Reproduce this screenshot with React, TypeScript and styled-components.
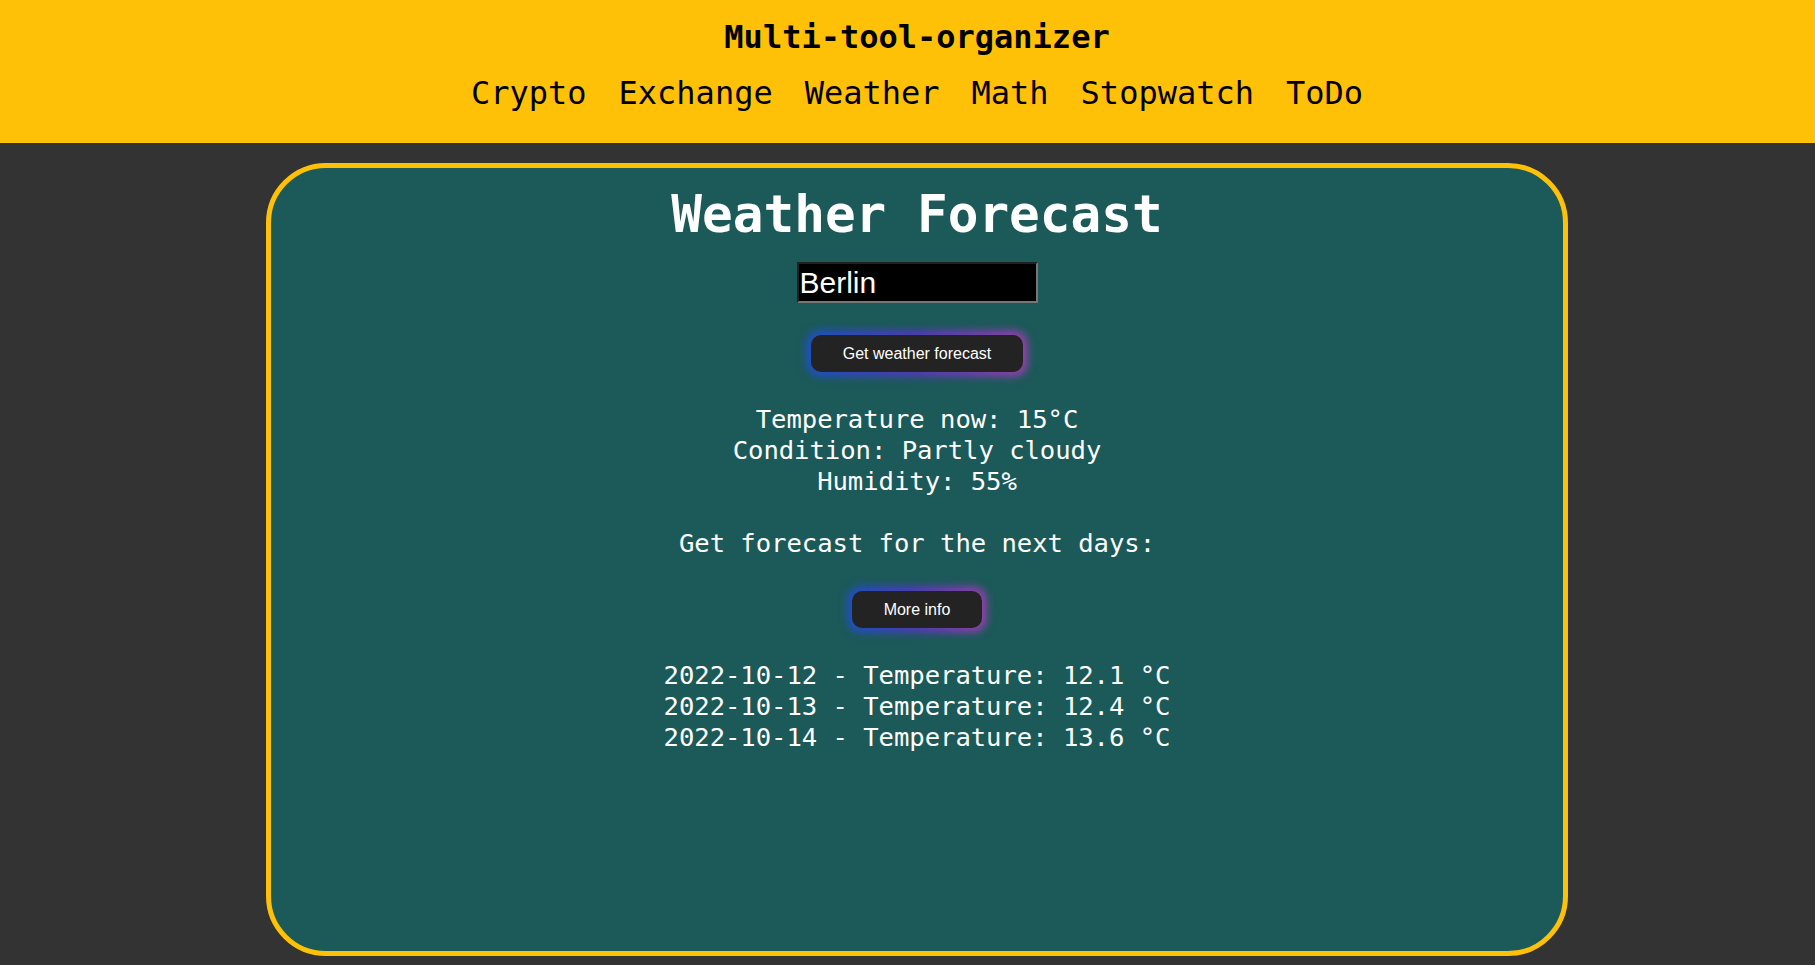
import React from "react";
import styled, { createGlobalStyle } from "styled-components";

const GlobalStyle = createGlobalStyle`
  html, body {
    margin: 0;
    padding: 0;
    background: #333333;
  }
  body {
    font-family: "DejaVu Sans Mono", "Liberation Mono", monospace;
  }
  * { box-sizing: border-box; }
`;

const Page = styled.div`
  min-height: 965px;
  background: #333333;
  display: flex;
  flex-direction: column;
`;

const Header = styled.header`
  background: #ffc107;
  height: 143px;
  padding: 17px 0 0 19px;
  display: flex;
  flex-direction: column;
  align-items: center;
  gap: 16px;
`;

const SiteTitle = styled.h1`
  margin: 0;
  font-size: 32px;
  line-height: 40px;
  font-weight: 700;
  color: #000;
`;

const Nav = styled.nav`
  display: flex;
  gap: 32px;
`;

const NavLink = styled.a`
  font-size: 32px;
  line-height: 40px;
  color: #000;
  text-decoration: none;
`;

const Main = styled.main`
  padding: 20px 0 9px 19px;
  display: flex;
  justify-content: center;
`;

const Card = styled.section`
  width: 1302px;
  height: 793px;
  background: #1c5959;
  border: 5px solid #ffc107;
  border-radius: 60px;
  padding-top: 17px;
  display: flex;
  flex-direction: column;
  align-items: center;
  color: #ffffff;
`;

const CardTitle = styled.h2`
  margin: 0;
  font-size: 51px;
  line-height: 60px;
  font-weight: 700;
`;

const CityInput = styled.input`
  margin-top: 17px;
  width: 241px;
  height: 41px;
  background: #000;
  color: #fff;
  border: 2px inset #767676;
  font-family: "Liberation Sans", Arial, sans-serif;
  font-size: 30px;
  padding: 0 1px;
  outline: none;
`;

const GlowButton = styled.button<{ $mt: number }>`
  margin-top: ${(p) => p.$mt}px;
  position: relative;
  z-index: 0;
  height: 37px;
  padding: 0 32px;
  border: none;
  border-radius: 10px;
  background: transparent;
  color: #ffffff;
  font-family: "Liberation Sans", Arial, sans-serif;
  font-size: 16px;
  cursor: pointer;

  &::before {
    content: "";
    position: absolute;
    inset: -4px;
    border-radius: 13px;
    background: linear-gradient(90deg, #1c4fd6 0%, #5a35c8 50%, #a63cb4 100%);
    filter: blur(4px);
    z-index: -2;
  }

  &::after {
    content: "";
    position: absolute;
    inset: 0;
    border-radius: 10px;
    background: #232323;
    z-index: -1;
  }
`;

const InfoBlock = styled.div<{ $mt: number }>`
  margin-top: ${(p) => p.$mt}px;
  display: flex;
  flex-direction: column;
  align-items: center;
  font-size: 25.6px;
  line-height: 31px;
  letter-spacing: -0.05px;
`;

const InfoLine = styled.p`
  margin: 0;
  white-space: pre;
`;

const Spacer = styled.div`
  height: 31px;
`;

const NAV = ["Crypto", "Exchange", "Weather", "Math", "Stopwatch", "ToDo"];
const FORECAST = [
  { date: "2022-10-12", temp: "12.1" },
  { date: "2022-10-13", temp: "12.4" },
  { date: "2022-10-14", temp: "13.6" },
];

export default function App() {
  return (
    <Page>
      <GlobalStyle />
      <Header>
        <SiteTitle>Multi-tool-organizer</SiteTitle>
        <Nav>
          {NAV.map((n) => (
            <NavLink key={n} href="#">
              {n}
            </NavLink>
          ))}
        </Nav>
      </Header>
      <Main>
        <Card>
          <CardTitle>Weather Forecast</CardTitle>
          <CityInput defaultValue="Berlin" />
          <GlowButton $mt={32}>Get weather forecast</GlowButton>
          <InfoBlock $mt={32}>
            <InfoLine>Temperature now: 15°C</InfoLine>
            <InfoLine>Condition: Partly cloudy</InfoLine>
            <InfoLine>Humidity: 55%</InfoLine>
            <Spacer />
            <InfoLine>Get forecast for the next days:</InfoLine>
          </InfoBlock>
          <GlowButton $mt={32}>More info</GlowButton>
          <InfoBlock $mt={32}>
            {FORECAST.map((f) => (
              <InfoLine key={f.date}>
                {f.date} - Temperature: {f.temp} °C
              </InfoLine>
            ))}
          </InfoBlock>
        </Card>
      </Main>
    </Page>
  );
}
